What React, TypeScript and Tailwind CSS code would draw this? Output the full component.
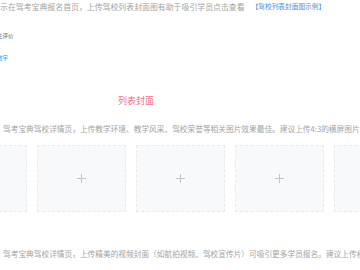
const font = { fontFamily: '"Noto Sans CJK SC", "Noto Sans", sans-serif' }

function PlusIcon() {
  return (
    <svg width="9" height="9" viewBox="0 0 9 9" className="text-[#c0c4cc]">
      <path d="M4.5 0v9M0 4.5h9" stroke="currentColor" strokeWidth="1" />
    </svg>
  )
}

function UploadBox() {
  return (
    <div className="flex h-[67px] w-[89px] shrink-0 items-center justify-center border border-dashed border-[#e9eaef] bg-[#f8f9fb]">
      <PlusIcon />
    </div>
  )
}

export default function App() {
  return (
    <div
      className="relative h-[270px] w-[360px] overflow-hidden bg-white"
      style={font}
    >
      <div className="flex flex-col">
        <div className="mt-[1px] flex h-[11px] items-center whitespace-nowrap text-[7.9px] text-[#a3a3a3]">
          <span>示在驾考宝典报名首页，上传驾校列表封面图有助于吸引学员点击查看</span>
          <span className="ml-[7px] text-[6.7px] text-[#4a90e2]">【驾校列表封面图示例】</span>
        </div>

        <div className="mt-[20px] -ml-[3px] whitespace-nowrap text-[5.5px] leading-[8px] text-[#666]">
          生评价
        </div>

        <div className="mt-[14px] -ml-[3px] whitespace-nowrap text-[5.5px] leading-[8px] text-[#1e9fff]">
          数字
        </div>

        <div className="mt-[33px] pl-[118px] text-[9px] leading-[12px] text-[#f5707f]">
          列表封面
        </div>

        <div className="mt-[17px] pl-[3px] whitespace-nowrap text-[7.7px] leading-[10px] text-[#a3a3a3]">
          驾考宝典驾校详情页，上传教学环境、教学风采、驾校荣誉等相关图片效果最佳。建议上传4:3的横屏图片
        </div>

        <div className="mt-[11px] -ml-[62px] flex gap-[10px]">
          <UploadBox />
          <UploadBox />
          <UploadBox />
          <UploadBox />
          <UploadBox />
        </div>

        <div className="mt-[37px] pl-[3px] whitespace-nowrap text-[7.7px] leading-[10px] text-[#a3a3a3]">
          驾考宝典驾校详情页，上传精美的视频封面（如航拍视频、驾校宣传片）可吸引更多学员报名。建议上传横屏视频
        </div>
      </div>
    </div>
  )
}
